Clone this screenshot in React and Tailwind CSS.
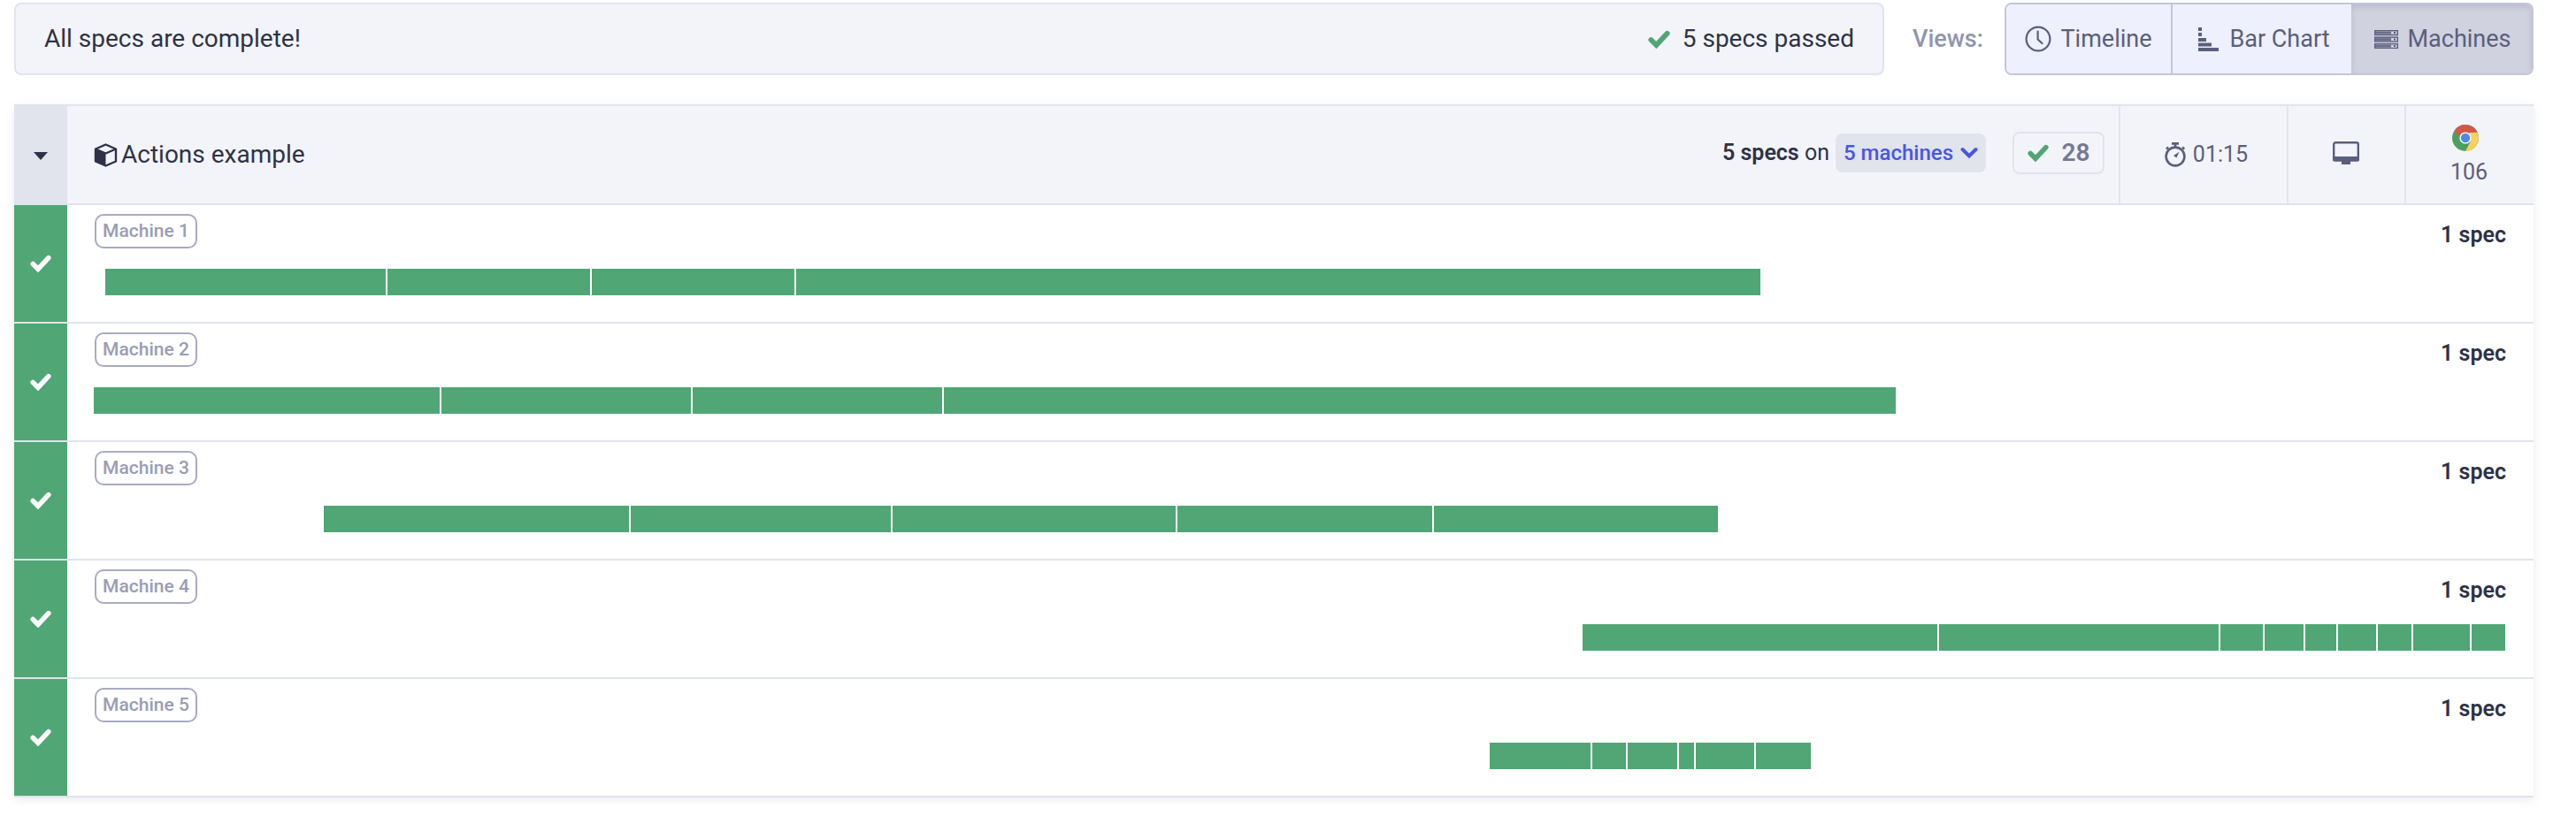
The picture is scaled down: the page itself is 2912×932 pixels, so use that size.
import React from "react";

const MACHINES = [
  { name: "Machine 1", stops: [119, 437, 668, 899, 1990] },
  { name: "Machine 2", stops: [106, 498, 782, 1066, 2143] },
  { name: "Machine 3", stops: [366, 712, 1008, 1330, 1620, 1942] },
  { name: "Machine 4", stops: [1789, 2191, 2509, 2559, 2605, 2642, 2687, 2727, 2793, 2832] },
  { name: "Machine 5", stops: [1684, 1799, 1839, 1897, 1916, 1984, 2047] },
];

function Check({ className }) {
  return (
    <svg viewBox="0 0 24 20" className={className}>
      <path d="M3.2 10.5 9 16.3 20.8 3.6" fill="none" stroke="currentColor" strokeWidth="5.6" strokeLinecap="round" strokeLinejoin="miter" />
    </svg>
  );
}

function Chevron() {
  return (
    <svg viewBox="0 0 20 14" className="h-[14px] w-[20px] shrink-0">
      <path d="M2.5 3 10 10.5 17.5 3" fill="none" stroke="currentColor" strokeWidth="4" strokeLinecap="round" />
    </svg>
  );
}

function Cube() {
  return (
    <svg width="27" height="27" viewBox="0 0 27 27" className="shrink-0">
      <path d="M13.5 1.5 25 6.5v14L13.5 25.5 2 20.5v-14z" fill="none" stroke="#2e3247" strokeWidth="2.4" strokeLinejoin="round" />
      <path d="M2 6.5 13.5 11.5V25.5L2 20.5z" fill="#2e3247" />
      <path d="M2 6.5 13.5 11.5 25 6.5" fill="none" stroke="#2e3247" strokeWidth="2.2" strokeLinejoin="round" />
    </svg>
  );
}

function ClockIcon() {
  return (
    <svg width="30" height="30" viewBox="0 0 30 30" className="shrink-0">
      <circle cx="15" cy="15" r="13.4" fill="none" stroke="#5a5f7d" strokeWidth="2.2" />
      <path d="M14.6 6.5V15.5L19.5 20" fill="none" stroke="#5a5f7d" strokeWidth="2.2" strokeLinecap="round" strokeLinejoin="round" />
    </svg>
  );
}

function BarChartIcon() {
  return (
    <svg width="23" height="27" viewBox="0 0 23 27" className="shrink-0" fill="#5a5f7d">
      <rect x="0" y="0" width="4" height="4" />
      <rect x="0" y="6" width="4" height="4" />
      <rect x="0" y="12" width="9" height="4" />
      <rect x="0" y="17.5" width="15" height="4" />
      <rect x="0" y="23" width="23" height="4" />
    </svg>
  );
}

function ServerIcon() {
  return (
    <svg width="27" height="21" viewBox="0 0 27 21" className="shrink-0">
      {[0, 7.5, 15].map((y) => (
        <g key={y}>
          <rect x="0.7" y={y + 0.7} width="25.6" height="4.8" fill="none" stroke="#5a5f7d" strokeWidth="1.4" />
          <rect x="1" y={y + 1.6} width="18" height="3" fill="#6a6f8c" />
          <rect x="22" y={y + 2} width="2" height="2" fill="#5a5f7d" />
        </g>
      ))}
    </svg>
  );
}

function Stopwatch() {
  return (
    <svg width="24" height="28" viewBox="0 0 24 28" className="shrink-0">
      <circle cx="12" cy="16" r="10.4" fill="none" stroke="#5a5f7d" strokeWidth="2.6" />
      <path d="M8 1.4h8M12 1.4v4M20 5.5l2.2 2.2" fill="none" stroke="#5a5f7d" strokeWidth="2.6" />
      <path d="M2 7.7 4.2 5.5" fill="none" stroke="#5a5f7d" strokeWidth="2.6" />
      <path d="M16.5 10.8 13.4 17.6 10 15z" fill="#5a5f7d" />
    </svg>
  );
}

function Monitor() {
  return (
    <svg width="30" height="26" viewBox="0 0 30 26" className="shrink-0">
      <rect x="1.2" y="1.2" width="27.6" height="20" rx="2" fill="none" stroke="#5a5f7d" strokeWidth="2.4" />
      <rect x="0" y="17" width="30" height="5.4" rx="1.5" fill="#5a5f7d" />
      <path d="M10 22h10v4H10z" fill="#5a5f7d" />
    </svg>
  );
}

function Chrome() {
  return (
    <svg width="30" height="30" viewBox="0 0 30 30" className="mr-[8px] shrink-0">
      <circle cx="15" cy="15" r="15" fill="#4d9f5f" />
      <path d="M15 0A15 15 0 0 1 28.6 8.7L15 9.5 5.8 12.6 3.2 5.8A15 15 0 0 1 15 0z" fill="#cf5a48" />
      <path d="M28.6 8.7A15 15 0 0 1 15 30L21 18.5 19.5 9z" fill="#f8cf60" />
      <circle cx="15" cy="15" r="6.6" fill="#ffffff" />
      <circle cx="15" cy="15" r="5.2" fill="#5087e8" />
    </svg>
  );
}

function Bar({ stops }) {
  const last = stops.length - 2;
  const segments = stops.slice(0, -1).map((s, i) => {
    const raw = stops[i + 1] - s;
    return raw - (i > 0 ? 1 : 0) - (i < last ? 1 : 0);
  });
  return (
    <div className="mt-[21px] flex h-[30px] gap-[2px]" style={{ marginLeft: stops[0] - 107 }}>
      {segments.map((w, i) => (
        <div key={i} className="h-full shrink-0 bg-[#50a675]" style={{ width: w }} />
      ))}
    </div>
  );
}

function MachineRow({ name, stops }) {
  return (
    <div className="flex h-[134px] border-b-2 border-[#e1e3ed]">
      <div className="flex w-[60px] shrink-0 items-center justify-center bg-[#50a675]">
        <Check className="h-[20px] w-[24px] text-white" />
      </div>
      <div className="min-w-0 flex-1 pl-[31px] pr-[31px] pt-[10px]">
        <div className="flex h-[41px] items-start justify-between">
          <div className="flex h-[39px] w-[116px] items-center justify-center rounded-[10px] border-2 border-[#a9abc2] text-[21px] font-medium text-[#9a9db4]">
            {name}
          </div>
          <div className="mt-[8px] text-[25px] font-semibold leading-[32px] text-[#2e3247]">1 spec</div>
        </div>
        <Bar stops={stops} />
      </div>
    </div>
  );
}

export default function App() {
  return (
    <div className="min-h-[932px] w-[2912px] bg-white pl-4 pt-[3px] font-['Roboto','Liberation_Sans',sans-serif] text-[#2e3247]">
      <div className="flex h-[82px] w-[2848px] items-center">
        <div className="flex h-full w-[2114px] items-center justify-between rounded-lg border-2 border-[#e1e3ed] bg-[#f3f4fa] pl-[32px] pr-[32px] text-[28px]">
          <span>All specs are complete!</span>
          <span className="flex items-center gap-[14px]">
            <Check className="h-[21px] w-[25px] text-[#50a675]" />
            5 specs passed
          </span>
        </div>
        <span className="ml-[32px] text-[27px] font-medium text-[#9095ad]">Views:</span>
        <div className="ml-auto flex h-full w-[598px] overflow-hidden rounded-lg border-2 border-[#c4c6d8] text-[27px] text-[#5a5f7d]">
          <div className="flex w-[188px] items-center justify-center gap-[10px] border-r-2 border-[#c4c6d8] bg-[#eef0fd]">
            <ClockIcon />
            Timeline
          </div>
          <div className="flex w-[202px] items-center justify-center gap-[12px] bg-[#eef0fd] pl-[5px]">
            <BarChartIcon />
            Bar Chart
          </div>
          <div className="flex flex-1 items-center justify-center gap-[11px] bg-[#d0d2df] pl-[2px] shadow-[inset_0_3px_6px_rgba(90,95,125,0.2)]">
            <ServerIcon />
            Machines
          </div>
        </div>
      </div>

      <div className="mt-[33px] w-[2848px] shadow-[0_3px_10px_rgba(90,95,125,0.12)]">
        <div className="flex h-[114px] border-y-2 border-[#e1e3ed] bg-[#f3f4fa]">
          <div className="flex w-[60px] shrink-0 items-center justify-center bg-[#e1e3ed]">
            <svg width="16" height="9" viewBox="0 0 16 9" className="mt-[2px]">
              <path d="M0 0h16L8 9z" fill="#2e3247" />
            </svg>
          </div>
          <div className="flex flex-1 items-center pl-[30px] pr-[16px]">
            <div className="flex items-center gap-[4px] text-[28px]">
              <Cube />
              Actions example
            </div>
            <div className="mb-[4px] ml-auto flex items-center">
              <span className="text-[25px]">
                <span className="font-semibold">5 specs</span> on
              </span>
              <span className="ml-[7px] flex h-[44px] w-[170px] items-center justify-center gap-[8px] rounded-lg bg-[#e1e3ed] text-[24px] font-medium text-[#4956e3]">
                5 machines
                <Chevron />
              </span>
              <span className="ml-[30px] flex h-[48px] w-[104px] items-center justify-center gap-[15px] rounded-lg border-2 border-[#e1e3ed] text-[28px] font-semibold text-[#747994]">
                <Check className="h-[20px] w-[24px] text-[#50a675]" />
                28
              </span>
            </div>
          </div>
          <div className="flex w-[190px] shrink-0 items-center justify-center gap-[8px] border-l-2 border-[#e1e3ed] pl-[6px] text-[25px] text-[#5a5f7d]">
            <Stopwatch />
            01:15
          </div>
          <div className="flex w-[133px] shrink-0 items-center justify-center border-l-2 border-[#e1e3ed] pb-[4px] pr-[2px]">
            <Monitor />
          </div>
          <div className="flex w-[146px] shrink-0 flex-col items-center justify-center gap-[9px] border-l-2 border-[#e1e3ed] pr-[2px] text-[25px] leading-[30px] text-[#5a5f7d]">
            <Chrome />
            106
          </div>
        </div>
        {MACHINES.map((m) => (
          <MachineRow key={m.name} name={m.name} stops={m.stops} />
        ))}
      </div>
    </div>
  );
}
